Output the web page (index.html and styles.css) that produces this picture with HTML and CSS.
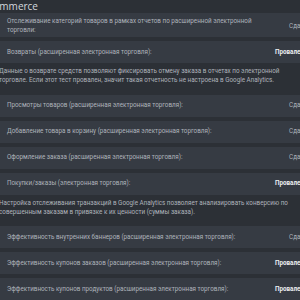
FILE: index.html
```html
<!DOCTYPE html>
<html lang="ru">
<head>
    <meta charset="UTF-8">
    <meta name="viewport" content="width=device-width, initial-scale=1.0">
    <title>Ecommerce</title>
    <link rel="stylesheet" href="styles.css">
</head>
<body>
  <div class="section">
    <h4 class="section-title">Ecommerce</h4>
    <div class="list">
        <div class="row">
            <span class="row-label">Отслеживание категорий товаров в рамках отчетов по расширенной электронной торговли:</span>
            <span class="status">Сдан</span>
        </div>
        <div class="row">
            <span class="row-label">Возвраты (расширенная электронная торговля):</span>
            <span class="status fail">Провален</span>
        </div>
        <p class="note">Данные о возврате средств позволяют фиксировать отмену заказа в отчетах по электронной торговле. Если этот тест провален, значит такая отчетность не настроена в Google Analytics.</p>
        <div class="row">
            <span class="row-label">Просмотры товаров (расширенная электронная торговля):</span>
            <span class="status">Сдан</span>
        </div>
        <div class="row">
            <span class="row-label">Добавление товара в корзину (расширенная электронная торговля):</span>
            <span class="status">Сдан</span>
        </div>
        <div class="row">
            <span class="row-label">Оформление заказа (расширенная электронная торговля):</span>
            <span class="status">Сдан</span>
        </div>
        <div class="row">
            <span class="row-label">Покупки/заказы (электронная торговля):</span>
            <span class="status fail">Провален</span>
        </div>
        <p class="note">Настройка отслеживания транзакций в Google Analytics позволяет анализировать конверсию по совершенным заказам в привязке к их ценности (суммы заказа).</p>
        <div class="row">
            <span class="row-label">Эффективность внутренних баннеров (расширенная электронная торговля):</span>
            <span class="status">Сдан</span>
        </div>
        <div class="row">
            <span class="row-label">Эффективность купонов заказов (расширенная электронная торговля):</span>
            <span class="status fail">Провален</span>
        </div>
        <div class="row">
            <span class="row-label">Эффективность купонов продуктов (расширенная электронная торговля):</span>
            <span class="status fail">Провален</span>
        </div>
    </div>
  </div>
</body>
</html>
```

FILE: styles.css
```css
body {
    font-family: Roboto, "Open Sans", Arial, sans-serif;
    margin: 0;
    padding: 0;
    background-color: #2c3036;
    color: #aeb3bb;
    overflow: hidden;
    height: 100vh;
}
.section {
    width: 340px;
    margin-left: -20px;
}
.section-title {
    margin: 0;
    padding-left: 3px;
    font-family: "Open Sans", Arial, sans-serif;
    font-size: 10px;
    line-height: 12px;
    font-weight: 400;
    color: #d4d8de;
}
.list {
    display: flex;
    flex-direction: column;
    gap: 4px;
    margin-top: 1px;
}
.row {
    display: flex;
    align-items: center;
    justify-content: space-between;
    background-color: #363b43;
    margin-left: 15px;
    padding: 6.5px 16px 6.5px 12px;
    font-size: 6.3px;
    line-height: 9px;
}
.row:first-child {
    padding-top: 4px;
    padding-bottom: 2px;
}
.row-label {
    max-width: 262px;
}
.status {
    text-align: right;
    white-space: nowrap;
}
.status.fail {
    font-weight: 700;
    color: #eceef1;
}
.note {
    margin: 0;
    padding: 0 22px 5.5px 19px;
    font-size: 6.3px;
    line-height: 9px;
}
```
